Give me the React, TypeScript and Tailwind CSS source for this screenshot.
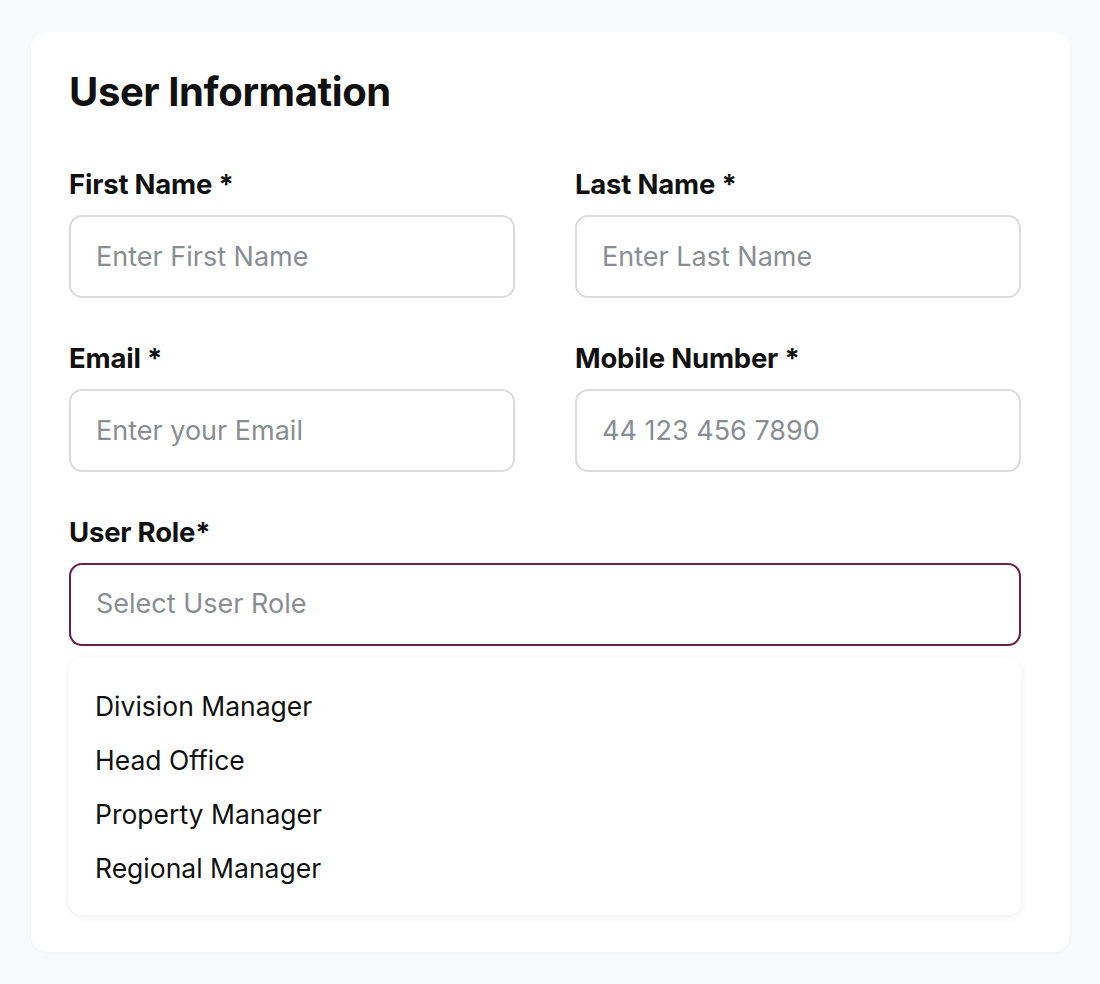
import React from 'react';

const roles = ['Division Manager', 'Head Office', 'Property Manager', 'Regional Manager'];

const Field: React.FC<{ label: string; placeholder: string }> = ({ label, placeholder }) => (
  <div className="flex flex-col">
    <label className="text-[27.5px] leading-[32px] font-bold text-[#111111] tracking-[-0.2px]">{label}</label>
    <input
      placeholder={placeholder}
      className="mt-[15px] h-[83px] w-full rounded-[13px] border-2 border-[#dcdcdc] bg-white px-[25px] text-[27px] text-[#111111] outline-none placeholder:text-[#8a8e92]"
    />
  </div>
);

export default function App() {
  return (
    <div
      className="min-h-[984px] bg-[#f8f9fb] pt-[32px] pl-[31px]"
      style={{ fontFamily: 'Inter, "Noto Sans", sans-serif' }}
    >
      <div className="w-[1039px] rounded-[16px] bg-white pt-[38px] pb-[37px] pl-[38px] pr-[49px] shadow-[0_1px_3px_rgba(0,0,0,0.03)]">
        <h2 className="text-[40px] leading-[44px] font-bold text-[#111111] tracking-[-0.4px]">User Information</h2>

        <div className="mt-[54px] grid grid-cols-2 gap-x-[60px] gap-y-[44px]">
          <Field label="First Name *" placeholder="Enter First Name" />
          <Field label="Last Name *" placeholder="Enter Last Name" />
          <Field label="Email *" placeholder="Enter your Email" />
          <Field label="Mobile Number *" placeholder="44 123 456 7890" />
        </div>

        <div className="mt-[44px] flex flex-col">
          <label className="text-[27.5px] leading-[32px] font-bold text-[#111111] tracking-[-0.2px]">User Role*</label>
          <div className="mt-[15px] flex h-[83px] items-center rounded-[13px] border-2 border-[#6b1f45] bg-white px-[25px] text-[27px] text-[#8a8e92]">
            Select User Role
          </div>
          <div className="mt-[12px] rounded-[13px] bg-white pt-[22px] pb-[19px] px-[26px] shadow-[0_2px_8px_rgba(0,0,0,0.07)]">
            {roles.map((r) => (
              <div key={r} className="h-[54px] flex items-center text-[26.5px] text-[#111111]">
                {r}
              </div>
            ))}
          </div>
        </div>
      </div>
    </div>
  );
}
